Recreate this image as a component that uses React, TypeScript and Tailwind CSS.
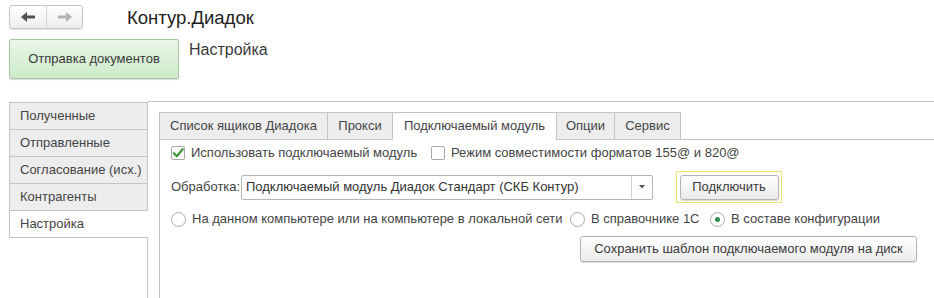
import React from "react";

const font = { fontFamily: '"Liberation Sans", Arial, sans-serif' };

function Arrow({ dir, color }: { dir: "left" | "right"; color: string }) {
  return (
    <svg width="14" height="10" viewBox="0 0 14 10">
      {dir === "left" ? (
        <g fill={color}>
          <polygon points="0,5 6,0 6,10" />
          <rect x="5" y="3.5" width="9" height="3" />
        </g>
      ) : (
        <g fill={color}>
          <polygon points="14,5 8,0 8,10" />
          <rect x="0" y="3.5" width="9" height="3" />
        </g>
      )}
    </svg>
  );
}

function Checkbox({ checked }: { checked?: boolean }) {
  return (
    <div className="w-[14px] h-[14px] border border-[#a9a9a9] rounded-[2px] bg-white flex items-center justify-center shrink-0">
      {checked && (
        <svg width="12" height="12" viewBox="0 0 12 12">
          <path d="M1.8 6.2 L4.8 9.2 L10.6 2.2" fill="none" stroke="#3f9a3a" strokeWidth="2.3" strokeLinecap="round" strokeLinejoin="round" />
        </svg>
      )}
    </div>
  );
}

function Radio({ checked }: { checked?: boolean }) {
  return (
    <div className="w-[15px] h-[15px] rounded-full border border-[#a9a9a9] bg-white flex items-center justify-center shrink-0">
      {checked && <div className="w-[5px] h-[5px] rounded-full bg-[#2f8a52]" />}
    </div>
  );
}

export default function App() {
  const leftTabs = ["Полученные", "Отправленные", "Согласование (исх.)", "Контрагенты"];
  const innerTabs: { label: string; w: string; sel?: boolean; last?: boolean }[] = [
    { label: "Список ящиков Диадока", w: "w-[168px]" },
    { label: "Прокси", w: "w-[65px]" },
    { label: "Подключаемый модуль", w: "w-[164px]", sel: true },
    { label: "Опции", w: "w-[58px]" },
    { label: "Сервис", w: "w-[67px]", last: true },
  ];
  return (
    <div style={font} className="w-[934px] h-[298px] overflow-hidden bg-white text-[#444] text-[13px] flex flex-col">
      {/* header */}
      <div className="h-[101px] shrink-0 flex flex-col pl-[9px] pt-[5px]">
        <div className="flex items-start">
          <div className="w-[74px] h-[24px] flex rounded-[3px] border border-[#c6c6c6] bg-gradient-to-b from-white to-[#ededed] shadow-[0_1px_1px_rgba(0,0,0,0.12)]">
            <div className="w-[37px] flex items-center justify-center border-r border-[#d6d6d6]">
              <Arrow dir="left" color="#505050" />
            </div>
            <div className="flex-1 flex items-center justify-center">
              <Arrow dir="right" color="#b3b3b3" />
            </div>
          </div>
          <div className="ml-[44px] mt-[2px] text-[18.5px] leading-[22px] text-[#1e1e1e]">Контур.Диадок</div>
        </div>
        <div className="flex items-start mt-[10px]">
          <div className="w-[170px] h-[40px] rounded-[2px] border border-[#a8c6a4] bg-gradient-to-b from-[#e9f7e7] to-[#cdeac9] shadow-[0_1px_1px_rgba(0,0,0,0.15)] flex items-center justify-center text-[13px] text-[#3a3a3a]">
            Отправка документов
          </div>
          <div className="ml-[10px] mt-px text-[16px] leading-[19px] text-[#3a3a3a]">Настройка</div>
        </div>
      </div>

      {/* main */}
      <div className="flex-1 flex">
        {/* left vertical tabs */}
        <div className="w-[148px] shrink-0 pl-[9px] pt-px flex flex-col">
          {leftTabs.map((t) => (
            <div key={t} className="h-[27px] shrink-0 border-l border-t border-r border-[#c4c4c4] bg-[#ededed] pl-[10px] flex items-center">
              {t}
            </div>
          ))}
          <div className="h-[27px] shrink-0 border-l border-t border-[#c4c4c4] bg-white pl-[10px] flex items-center">
            Настройка
          </div>
          <div className="flex-1 border-t border-r border-[#c4c4c4]" />
        </div>

        {/* right panel */}
        <div className="flex-1 border-t border-[#c4c4c4] pl-[11px] pt-[10px] flex flex-col">
          <div className="flex h-[28px] shrink-0">
            {innerTabs.map((t) => (
              <div
                key={t.label}
                className={`${t.w} shrink-0 border-t border-l ${t.last ? "border-r" : ""} border-[#c4c4c4] flex items-center justify-center ${
                  t.sel ? "bg-white border-b border-b-white" : "bg-[#ededed] border-b"
                }`}
              >
                {t.label}
              </div>
            ))}
            <div className="flex-1 border-b border-[#c4c4c4]" />
          </div>

          <div className="flex-1 border-l border-[#c4c4c4] pl-[11px] pt-[4px] flex flex-col">
            {/* row 1 */}
            <div className="h-[18px] flex items-center">
              <div className="w-[260px] flex items-center shrink-0">
                <Checkbox checked />
                <span className="ml-[6px]">Использовать подключаемый модуль</span>
              </div>
              <div className="flex items-center">
                <Checkbox />
                <span className="ml-[6px]">Режим совместимости форматов 155@ и 820@</span>
              </div>
            </div>

            {/* row 2 */}
            <div className="h-[32px] mt-[9px] flex items-center">
              <span className="w-[70px] shrink-0">Обработка:</span>
              <div className="w-[412px] h-[25px] flex border border-[#b5b5b5] rounded-[2px] bg-white shrink-0">
                <div className="flex-1 pl-[4px] flex items-center text-[#333]">
                  Подключаемый модуль Диадок Стандарт (СКБ Контур)
                </div>
                <div className="w-[21px] border-l border-[#cfcfcf] flex items-center justify-center">
                  <svg width="6" height="4" viewBox="0 0 6 4">
                    <polygon points="0,0 6,0 3,3.5" fill="#555" />
                  </svg>
                </div>
              </div>
              <div className="ml-[23px] w-[106px] h-[32px] border border-[#ece27a] flex items-center justify-center">
                <div className="w-[99px] h-[25px] rounded-[3px] border border-[#b3b3b3] bg-gradient-to-b from-white to-[#ebebeb] shadow-[0_1px_1px_rgba(0,0,0,0.15)] flex items-center justify-center text-[#3a3a3a]">
                  Подключить
                </div>
              </div>
            </div>

            {/* row 3 */}
            <div className="h-[18px] mt-[7px] flex items-center">
              <div className="w-[399px] shrink-0 flex items-center">
                <Radio />
                <span className="ml-[6px]">На данном компьютере или на компьютере в локальной сети</span>
              </div>
              <div className="w-[140px] shrink-0 flex items-center">
                <Radio />
                <span className="ml-[6px]">В справочнике 1С</span>
              </div>
              <div className="flex items-center">
                <Radio checked />
                <span className="ml-[6px]">В составе конфигурации</span>
              </div>
            </div>

            {/* row 4 */}
            <div className="mt-[8px] ml-[409px] w-[337px] h-[26px] rounded-[3px] border border-[#b3b3b3] bg-gradient-to-b from-white to-[#ebebeb] shadow-[0_1px_1px_rgba(0,0,0,0.15)] flex items-center justify-center text-[#3a3a3a]">
              Сохранить шаблон подключаемого модуля на диск
            </div>
          </div>
        </div>
      </div>
    </div>
  );
}
